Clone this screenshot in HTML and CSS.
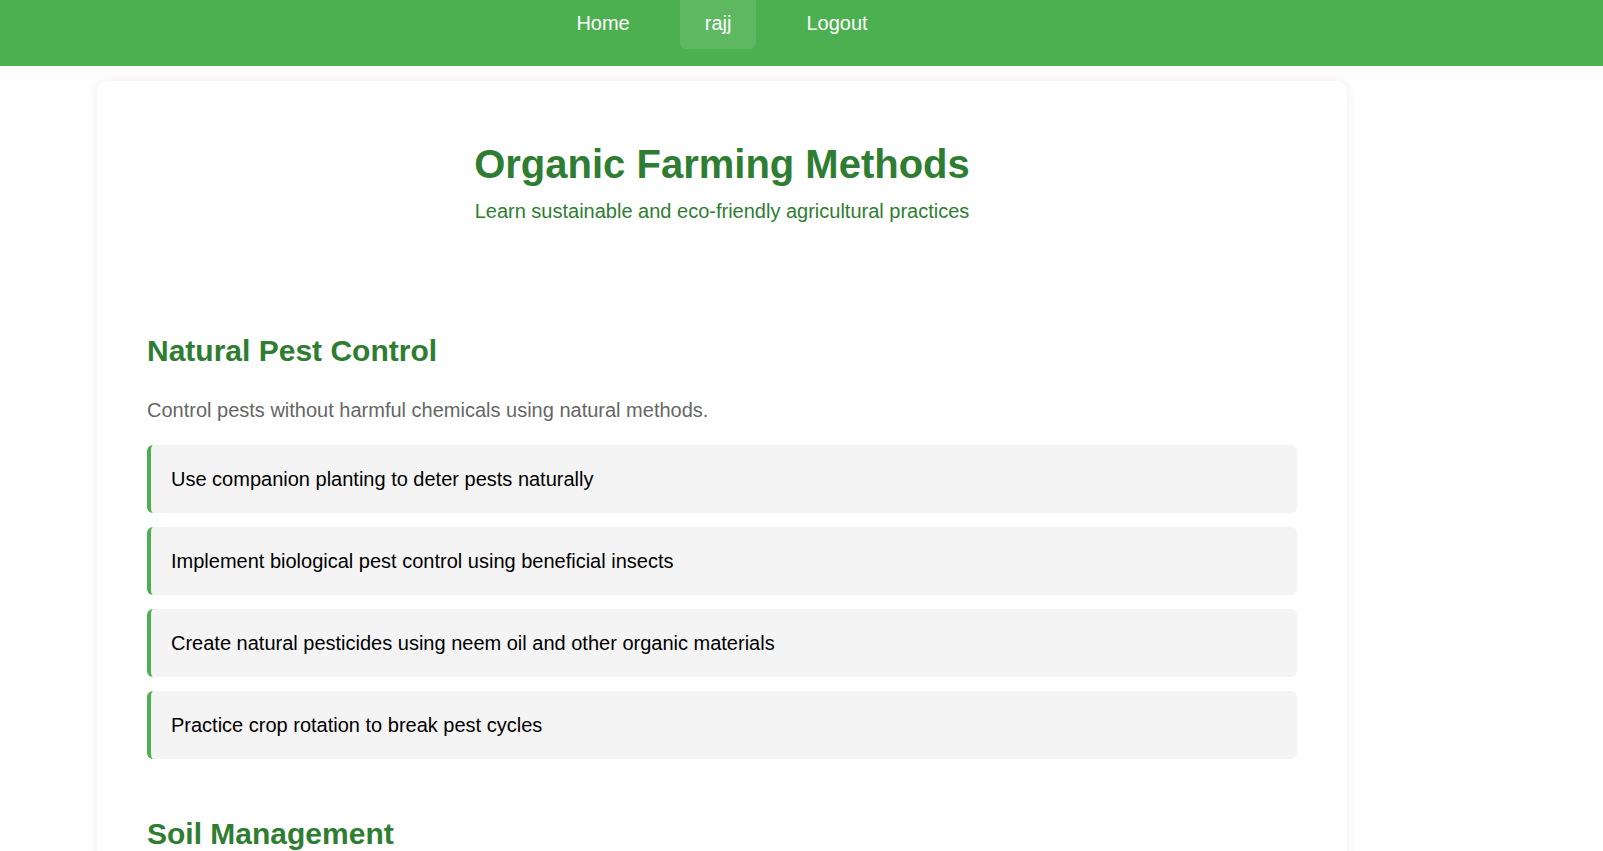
FILE: index.html
```html
<!DOCTYPE html>
<html lang="en">
<head>
<meta charset="utf-8">
<title>Organic Farming Methods</title>
<link rel="stylesheet" href="styles.css">
</head>
<body>
<nav class="topnav">
  <div class="topnav-inner">
    <a class="nav-link" href="#">Home</a>
    <a class="nav-link active" href="#">rajj</a>
    <a class="nav-link" href="#">Logout</a>
  </div>
</nav>
<main class="card">
  <header class="page-header">
    <h1 class="page-title">Organic Farming Methods</h1>
    <p class="page-subtitle">Learn sustainable and eco-friendly agricultural practices</p>
  </header>
  <section class="method">
    <h2 class="method-title">Natural Pest Control</h2>
    <p class="method-desc">Control pests without harmful chemicals using natural methods.</p>
    <ul class="tips">
      <li class="tip">Use companion planting to deter pests naturally</li>
      <li class="tip">Implement biological pest control using beneficial insects</li>
      <li class="tip">Create natural pesticides using neem oil and other organic materials</li>
      <li class="tip">Practice crop rotation to break pest cycles</li>
    </ul>
  </section>
  <section class="method">
    <h2 class="method-title">Soil Management</h2>
    <p class="method-desc">Build healthy, fertile soil through organic practices.</p>
    <ul class="tips">
      <li class="tip">Add compost and organic matter regularly</li>
      <li class="tip">Use cover crops to protect and enrich the soil</li>
      <li class="tip">Practice minimal tillage to preserve soil structure</li>
    </ul>
  </section>
</main>
</body>
</html>
```
FILE: styles.css
```css
* {
  box-sizing: border-box;
}

html, body {
  margin: 0;
  padding: 0;
}

body {
  font-family: "Liberation Sans", Arial, Helvetica, sans-serif;
  font-size: 20px;
  background: #ffffff;
  color: #000;
}

.topnav {
  background: #4caf50;
  height: 66px;
}

.topnav-inner {
  width: 1250px;
  margin-left: 97px;
  display: flex;
  justify-content: center;
  gap: 25px;
}

.nav-link {
  display: block;
  color: #ffffff;
  text-decoration: none;
  font-size: 20px;
  line-height: 23px;
  padding: 12px 25px 14px;
  border-radius: 0 0 6px 6px;
}

.nav-link.active {
  background: rgba(255, 255, 255, 0.1);
}

.card {
  width: 1250px;
  margin: 15px 0 0 97px;
  padding: 50px;
  background: #ffffff;
  border-radius: 10px;
  box-shadow: 0 0 12px rgba(0, 0, 0, 0.08);
}

.page-header {
  text-align: center;
  margin-bottom: 111px;
}

.page-title {
  margin: 10px 0 13px;
  font-size: 40px;
  line-height: 46px;
  font-weight: bold;
  color: #2e7d32;
}

.page-subtitle {
  margin: 0;
  font-size: 20px;
  line-height: 23px;
  color: #2e7d32;
}

.method {
  margin-bottom: 58px;
}

.method-title {
  margin: 0 0 31px;
  font-size: 30px;
  line-height: 34px;
  font-weight: bold;
  color: #2e7d32;
}

.method-desc {
  margin: 0 0 23px;
  font-size: 20px;
  line-height: 23px;
  color: #666666;
}

.tips {
  list-style: none;
  margin: 0;
  padding: 0;
}

.tip {
  background: #f4f4f4;
  border-left: 4px solid #4caf50;
  border-radius: 6px;
  padding: 19px 20px;
  line-height: 30px;
  margin-bottom: 14px;
  color: #000;
}
```
